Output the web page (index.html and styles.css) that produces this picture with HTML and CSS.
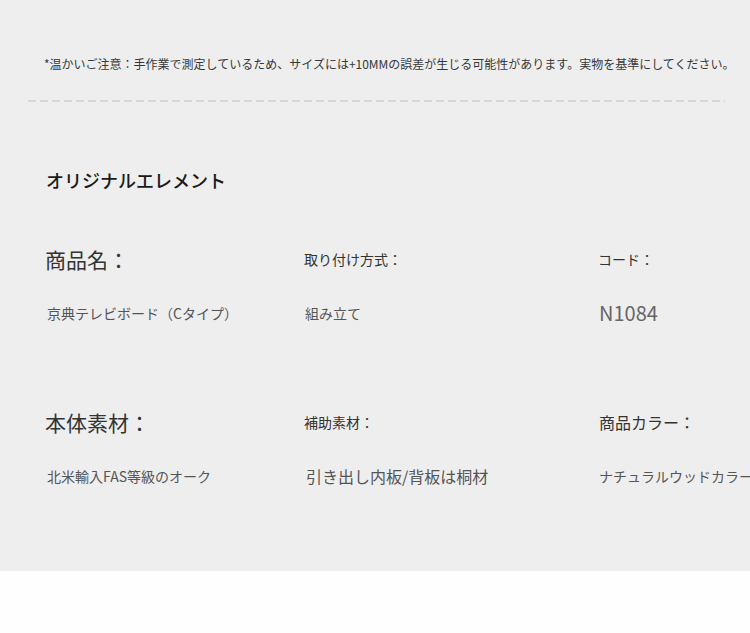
FILE: index.html
```html
<!DOCTYPE html>
<html lang="ja">
<head>
    <meta charset="UTF-8">
    <meta name="viewport" content="width=device-width, initial-scale=1.0">
    <title>商品情報</title>
    <link rel="stylesheet" href="styles.css">
</head>
<body>
    <div class="panel">
        <p class="note">*温かいご注意：手作業で測定しているため、サイズには+10MMの誤差が生じる可能性があります。実物を基準にしてください。</p>
        <div class="divider"></div>
        <h2 class="title">オリジナルエレメント</h2>
        <div class="spec-grid">
            <div class="spec">
                <div class="label label-big">商品名：</div>
                <div class="value">京典テレビボード（Cタイプ）</div>
            </div>
            <div class="spec">
                <div class="label">取り付け方式：</div>
                <div class="value">組み立て</div>
            </div>
            <div class="spec">
                <div class="label">コード：</div>
                <div class="value value-code">N1084</div>
            </div>
            <div class="spec">
                <div class="label label-big">本体素材：</div>
                <div class="value">北米輸入FAS等級のオーク</div>
            </div>
            <div class="spec">
                <div class="label">補助素材：</div>
                <div class="value value-mid">引き出し内板/背板は桐材</div>
            </div>
            <div class="spec">
                <div class="label label-mid">商品カラー：</div>
                <div class="value">ナチュラルウッドカラー</div>
            </div>
        </div>
    </div>
</body>
</html>
```

FILE: styles.css
```css
html, body {
    margin: 0;
    background: #fefefe;
    font-family: "Noto Sans CJK JP", "Noto Sans", sans-serif;
    overflow: hidden;
}
.panel {
    background: #eeeeee;
    height: 571px;
    padding-top: 54px;
    box-sizing: border-box;
    overflow: hidden;
}
.note {
    margin: 0;
    padding-left: 44px;
    font-size: 12px;
    line-height: 20px;
    color: #383838;
    white-space: nowrap;
}
.divider {
    margin: 26px 25px 0 28px;
    height: 2px;
    background: repeating-linear-gradient(to right, #d6d6d6 0, #d6d6d6 8px, transparent 8px, transparent 12px);
}
.title {
    margin: 66px 0 0 46px;
    font-size: 18px;
    line-height: 24px;
    font-weight: 500;
    color: #1a1a1a;
}
.spec-grid {
    display: grid;
    grid-template-columns: 258px 294px 1fr;
    row-gap: 82px;
    margin-top: 52px;
    padding-left: 46px;
}
.spec {
    display: flex;
    flex-direction: column;
    gap: 27px;
    white-space: nowrap;
}
.label {
    height: 30px;
    line-height: 30px;
    font-size: 14px;
    color: #333;
}
.label-big {
    font-size: 21px;
    margin-left: -1px;
}
.label-mid {
    font-size: 16px;
    margin-left: 1px;
}
.value {
    height: 24px;
    line-height: 24px;
    font-size: 14px;
    color: #555;
    padding-left: 1px;
}
.value-code {
    height: 28px;
    line-height: 28px;
    margin-top: -2px;
    margin-bottom: -2px;
    font-size: 20px;
    color: #666;
}
.value-mid {
    font-size: 16px;
    padding-left: 2px;
}
```
